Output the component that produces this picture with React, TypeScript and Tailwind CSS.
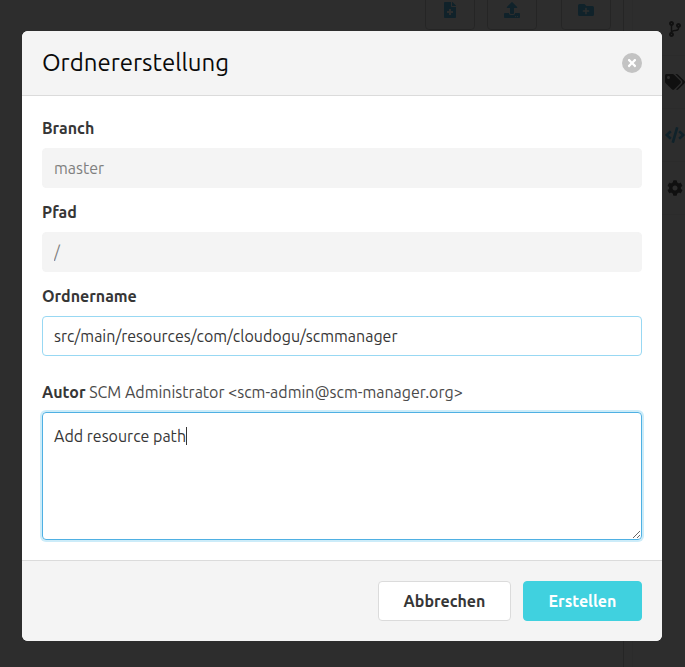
import { useState } from "react";
import type { ReactNode } from "react";
import {
  FaCode,
  FaCodeBranch,
  FaCog,
  FaFileMedical,
  FaFolderPlus,
  FaTags,
  FaTimes,
  FaUpload,
} from "react-icons/fa";

function ToolButton({ label, children }: { label: string; children: ReactNode }) {
  return (
    <button
      aria-label={label}
      className="flex h-10 w-[50px] items-center justify-center rounded border border-[#c8c8c8] text-[#33b2e8]"
    >
      {children}
    </button>
  );
}

function NavLink({
  label,
  active = false,
  children,
}: {
  label: string;
  active?: boolean;
  children: ReactNode;
}) {
  return (
    <a
      href="#"
      aria-label={label}
      className={`flex h-[53px] items-center justify-center border-b border-[#eeeeee] ${
        active ? "text-[#33b2e8]" : "text-[#363636]"
      }`}
    >
      {children}
    </a>
  );
}

function Repository() {
  return (
    <div className="flex h-screen justify-end overflow-hidden bg-white">
      <main className="flex grow justify-end border-r border-[#c8c8c8] pr-3">
        <div className="-mt-2.5 flex h-10">
          <div className="flex gap-3">
            <ToolButton label="Datei erstellen">
              <FaFileMedical size={16} />
            </ToolButton>
            <ToolButton label="Hochladen">
              <FaUpload size={16} />
            </ToolButton>
          </div>
          <div className="ml-6">
            <ToolButton label="Ordner erstellen">
              <FaFolderPlus size={16} />
            </ToolButton>
          </div>
        </div>
      </main>
      <nav className="-mr-8 ml-2 w-[85px] shrink-0 border-l border-[#eeeeee] pt-[3px]">
        <NavLink label="Branches">
          <FaCodeBranch size={16} />
        </NavLink>
        <NavLink label="Tags">
          <FaTags size={20} />
        </NavLink>
        <NavLink label="Code" active>
          <FaCode size={20} />
        </NavLink>
        <NavLink label="Einstellungen">
          <FaCog size={16} />
        </NavLink>
      </nav>
    </div>
  );
}

const fieldClass = "block h-10 w-full rounded border px-[11px] text-base leading-6 outline-none";

function Field({
  id,
  label,
  value,
  disabled = false,
  onChange,
}: {
  id: string;
  label: string;
  value: string;
  disabled?: boolean;
  onChange?: (value: string) => void;
}) {
  return (
    <div>
      <label htmlFor={id} className="mb-2 block font-bold">
        {label}
      </label>
      <input
        id={id}
        type="text"
        value={value}
        disabled={disabled}
        onChange={(event) => onChange?.(event.target.value)}
        className={`${fieldClass} ${
          disabled
            ? "border-[#f4f4f4] bg-[#f4f4f4] text-[#7f7f7f]"
            : "border-[#98d8f3] bg-white text-[#363636]"
        }`}
      />
    </div>
  );
}

export default function App() {
  const [name, setName] = useState("src/main/resources/com/cloudogu/scmmanager");
  const [message, setMessage] = useState("Add resource path");

  return (
    <div className="relative font-['Ubuntu','Noto_Sans',sans-serif] text-base leading-6 text-[#363636]">
      <Repository />
      <div className="absolute inset-0 bg-[#0a0a0a]/86 pt-[31px] pr-[21px] pl-5">
        <form
          role="dialog"
          aria-labelledby="dialog-title"
          onSubmit={(event) => event.preventDefault()}
          className="mx-auto max-w-[640px] overflow-hidden rounded-md bg-white"
        >
          <header className="flex items-center justify-between border-b border-[#dbdbdb] bg-[#f4f4f4] p-5">
            <h1 id="dialog-title" className="text-2xl leading-6 text-[#0a0a0a]">
              Ordnererstellung
            </h1>
            <button
              type="button"
              aria-label="Schließen"
              className="flex size-5 items-center justify-center rounded-full bg-[#c3c3c3] text-white"
            >
              <FaTimes size={12} />
            </button>
          </header>

          <div className="p-5">
            <div className="flex flex-col gap-3">
              <Field id="branch" label="Branch" value="master" disabled />
              <Field id="path" label="Pfad" value="/" disabled />
              <Field id="name" label="Ordnername" value={name} onChange={setName} />
            </div>
            <label htmlFor="message" className="mt-6 mb-2 block text-[#4a4a4a]">
              <strong className="font-bold text-[#363636]">Autor</strong> SCM Administrator
              &lt;scm-admin@scm-manager.org&gt;
            </label>
            <div className="relative">
              <textarea
                id="message"
                value={message}
                onChange={(event) => setMessage(event.target.value)}
                className="block h-32 w-full resize-y rounded border border-[#4fb0e3] p-[11px] text-base leading-6 ring-2 ring-[#33b2e8]/25 outline-none"
              />
              <div
                aria-hidden="true"
                className="pointer-events-none absolute top-0 left-0 flex items-center p-3"
              >
                <span className="invisible">{message}</span>
                <span className="h-[18px] w-px bg-[#363636]" />
              </div>
            </div>
          </div>

          <footer className="flex justify-end gap-3 border-t border-[#dbdbdb] bg-[#f4f4f4] p-5">
            <button
              type="button"
              className="h-10 min-w-[133px] rounded border border-[#dbdbdb] bg-white px-6 font-bold text-[#363636]"
            >
              Abbrechen
            </button>
            <button
              type="submit"
              className="h-10 min-w-[119px] rounded border border-[#40d1df] bg-[#40d1df] px-6 font-bold text-white"
            >
              Erstellen
            </button>
          </footer>
        </form>
      </div>
    </div>
  );
}
